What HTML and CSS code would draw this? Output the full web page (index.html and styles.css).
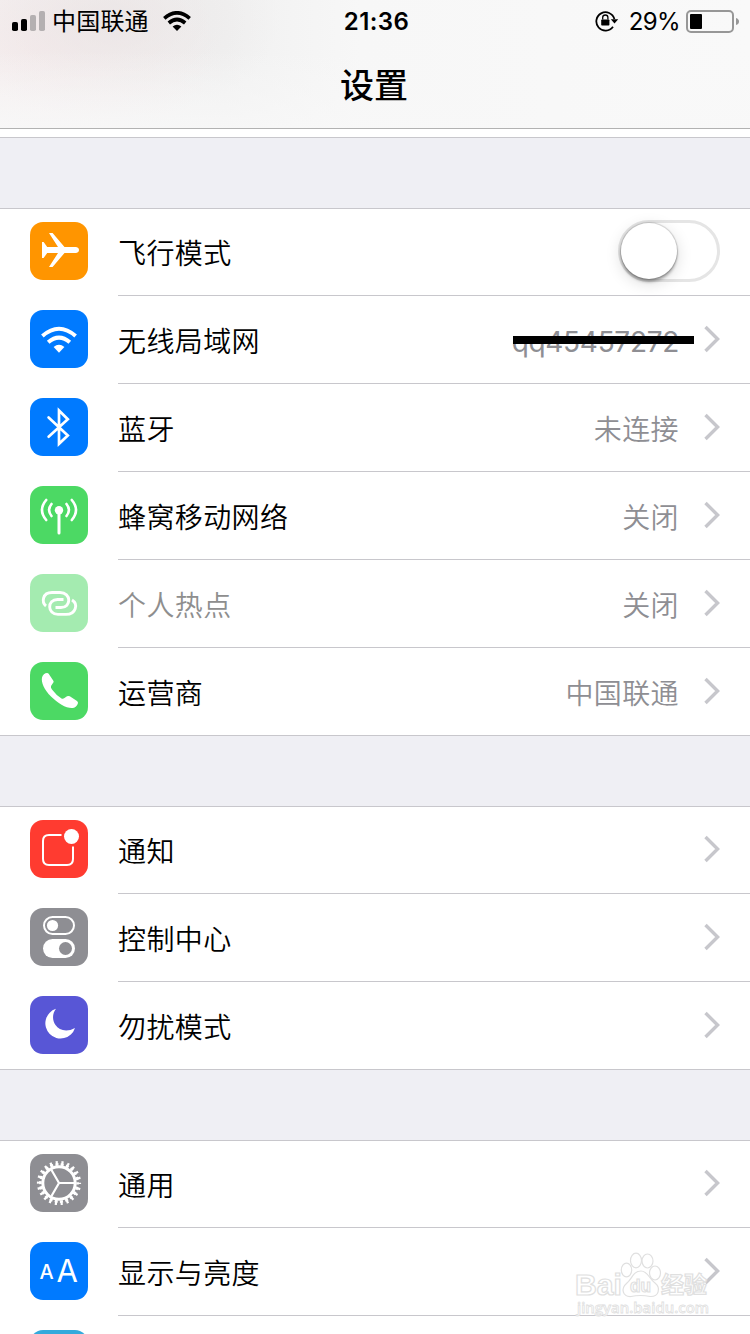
FILE: index.html
```html
<!DOCTYPE html>
<html lang="zh-CN">
<head>
  <meta charset="UTF-8">
  <title>设置</title>
  <meta name="viewport" content="width=device-width, initial-scale=1.0"/>
  <link rel="stylesheet" href="styles.css">
</head>
<body>

<svg class="defs" width="0" height="0">
  <symbol id="chevron" viewBox="0 0 16 28">
    <path d="M1.5 2 L13.6 14 L1.5 26" fill="none" stroke="#c7c7cc" stroke-width="3.4"/>
  </symbol>
</svg>

<!-- HEADER -->
<header class="header">
  <div class="status">
    <div class="status-left">
      <svg class="signal" width="34" height="20" viewBox="0 0 34 20">
        <rect x="0" y="11" width="6" height="9" rx="1.8"/>
        <rect x="9" y="8" width="6" height="12" rx="1.8"/>
        <rect x="18" y="4" width="6" height="16" rx="1.8" fill="#b4b0b1"/>
        <rect x="27" y="0" width="6" height="20" rx="1.8" fill="#b4b0b1"/>
      </svg>
      <span class="carrier">中国联通</span>
      <svg class="wifi" width="28" height="20" viewBox="0 0 28 20">
        <g fill="none" stroke="#000" stroke-width="3.7">
          <path d="M1.3 7.3 Q14 -3.6 26.7 7.3"/>
          <path d="M5.8 12 Q14 5 22.2 12"/>
        </g>
        <path d="M9.6 15.5 Q14 12 18.4 15.5 L14 20 Z"/>
      </svg>
    </div>
    <div class="time">21:36</div>
    <div class="status-right">
      <svg class="lock" width="24" height="22" viewBox="0 0 24 22">
        <path d="M18 16.8 A9.2 9.2 0 1 1 19.4 9" fill="none" stroke="#000" stroke-width="1.8"/>
        <path d="M15.8 9.2 H23.2 L19.5 13.4 Z"/>
        <rect x="6.2" y="9.4" width="8.2" height="6.2" rx="0.8"/>
        <path d="M7.7 9.6 V7.6 A2.6 2.6 0 0 1 12.9 7.6 V9.6" fill="none" stroke="#000" stroke-width="1.3"/>
      </svg>
      <span class="percent">29%</span>
      <svg class="battery" width="54" height="23" viewBox="0 0 54 23">
        <rect x="1" y="1" width="46" height="21" rx="4" fill="none" stroke="#979797" stroke-width="2"/>
        <rect x="4" y="4" width="12" height="15" rx="1"/>
        <path d="M50 8 Q53 9 53 11.5 Q53 14 50 15 Z" fill="#979797"/>
      </svg>
    </div>
  </div>
  <h1>设置</h1>
</header>
<div class="strip"></div>

<!-- NETWORK -->
<section class="group">
  <div class="row">
    <svg class="icon orange" viewBox="0 0 58 58">
      <path fill="#fff" d="M12 20 H13.6 L17.2 25 H28 L19 11 H22.6 L34.5 25 H45.5 Q49 25.3 49 28 Q49 30.7 45.5 31 H34.5 L22.6 45 H19 L28 31 H17.2 L13.6 36 H12 V20 Z"/>
    </svg>
    <div class="row-body">
      <span class="label">飞行模式</span>
      <span class="switch"><i></i></span>
    </div>
  </div>
  <div class="row">
    <svg class="icon blue" viewBox="0 0 58 58">
      <g fill="none" stroke="#fff" stroke-width="4">
        <path d="M12.4 26 Q29 11.5 45.6 26"/>
        <path d="M18.2 32.3 Q29 22.8 39.8 32.3"/>
      </g>
      <path fill="#fff" d="M23.6 37 Q29 32.6 34.4 37 L29 42.7 Z"/>
    </svg>
    <div class="row-body">
      <span class="label">无线局域网</span>
      <span class="value ssid">qq45457272</span>
      <svg class="chevron"><use href="#chevron"/></svg>
    </div>
  </div>
  <div class="row">
    <svg class="icon blue" viewBox="0 0 58 58">
      <path d="M18.6 19.5 L37.8 37.5 L29 45.8 V12.6 L37.8 21.3 L18.6 38.7" fill="none" stroke="#fff" stroke-width="2.7" stroke-linecap="round"/>
    </svg>
    <div class="row-body">
      <span class="label">蓝牙</span>
      <span class="value">未连接</span>
      <svg class="chevron"><use href="#chevron"/></svg>
    </div>
  </div>
  <div class="row">
    <svg class="icon green" viewBox="0 0 58 58">
      <circle cx="29" cy="24.3" r="4.2" fill="#fff"/>
      <g fill="none" stroke="#fff" stroke-width="2.6" stroke-linecap="round">
        <path d="M29 25 V47" stroke-width="3"/>
        <path d="M21.5 18 Q16.7 24 21.5 30"/>
        <path d="M36.5 18 Q41.3 24 36.5 30"/>
        <path d="M16.2 14 Q7.8 24 16.2 34"/>
        <path d="M41.8 14 Q50.2 24 41.8 34"/>
      </g>
    </svg>
    <div class="row-body">
      <span class="label">蜂窝移动网络</span>
      <span class="value">关闭</span>
      <svg class="chevron"><use href="#chevron"/></svg>
    </div>
  </div>
  <div class="row disabled">
    <svg class="icon green" viewBox="0 0 58 58">
      <g fill="none" stroke="#fff" stroke-width="2.9">
        <path d="M16 32 C11.5 28.5 12.2 18.5 22 18.5 H30 C41.5 18.5 41.5 33.5 31 33.5 H25.5"/>
        <path d="M42 26 C48.5 30 46 40.4 36 40.4 H28 C17 40.4 17 25.5 27.5 25.5 H33.5"/>
      </g>
    </svg>
    <div class="row-body">
      <span class="label">个人热点</span>
      <span class="value">关闭</span>
      <svg class="chevron"><use href="#chevron"/></svg>
    </div>
  </div>
  <div class="row">
    <svg class="icon green" viewBox="0 0 58 58">
      <path fill="#fff" d="M12 15.5 C12.5 13 15 11 17 11 Q18.3 11 19 12.2 L23.5 19 Q24 20 23 21 L21 24 Q20.5 25.5 22 27.5 Q26 33 31.5 36.5 Q33 37.3 34.5 36 L37 34.3 Q38.5 33.5 39.8 34.3 L47 39 Q48.5 40 47.8 41.8 Q46.5 45.3 43 46 C37 46.8 28 41.5 21 34.5 C14 27.5 11 20.5 12 15.5 Z"/>
    </svg>
    <div class="row-body">
      <span class="label">运营商</span>
      <span class="value">中国联通</span>
      <svg class="chevron"><use href="#chevron"/></svg>
    </div>
  </div>
</section>

<!-- NOTIFICATIONS -->
<section class="group">
  <div class="row">
    <svg class="icon red" viewBox="0 0 58 58">
      <path d="M31.5 15 H19 Q13 15 13 21 V39 Q13 45 19 45 H37 Q43 45 43 39 V26.5" fill="none" stroke="#fff" stroke-width="2"/>
      <circle cx="41.5" cy="16.5" r="7.5" fill="#fff"/>
    </svg>
    <div class="row-body">
      <span class="label">通知</span>
      <svg class="chevron"><use href="#chevron"/></svg>
    </div>
  </div>
  <div class="row">
    <svg class="icon gray" viewBox="0 0 58 58">
      <rect x="14" y="9" width="30" height="17" rx="8.5" fill="none" stroke="#fff" stroke-width="2"/>
      <circle cx="22.5" cy="17.5" r="5.6" fill="#fff"/>
      <rect x="13" y="31" width="32" height="19" rx="9.5" fill="#fff"/>
      <circle cx="35.5" cy="40.5" r="6.5" fill="#8e8e93"/>
    </svg>
    <div class="row-body">
      <span class="label">控制中心</span>
      <svg class="chevron"><use href="#chevron"/></svg>
    </div>
  </div>
  <div class="row">
    <svg class="icon purple" viewBox="0 0 58 58">
      <path fill="#fff" d="M26 12.8 A15.2 15.2 0 1 0 45 32 C37 36.5 29 34.5 25.5 29 C22 24 22.3 17.5 26 12.8 Z"/>
    </svg>
    <div class="row-body">
      <span class="label">勿扰模式</span>
      <svg class="chevron"><use href="#chevron"/></svg>
    </div>
  </div>
</section>

<!-- GENERAL -->
<section class="group">
  <div class="row">
    <svg class="icon gray" viewBox="0 0 58 58">
      <g fill="none" stroke="#fff">
        <circle cx="29" cy="29" r="16.2" stroke-width="3"/>
        <circle cx="29" cy="29" r="18.6" stroke-width="2.6" stroke-dasharray="3.1 2.212" stroke-dashoffset="1.55"/>
        <circle cx="29" cy="29" r="20.6" stroke-width="3" stroke-dasharray="2.2 3.683" stroke-dashoffset="1.1"/>
        <path d="M29 29 H44 M29 29 L21.5 16 M29 29 L21.5 42" stroke-width="2.2"/>
      </g>
    </svg>
    <div class="row-body">
      <span class="label">通用</span>
      <svg class="chevron"><use href="#chevron"/></svg>
    </div>
  </div>
  <div class="row">
    <svg class="icon blue" viewBox="0 0 58 58">
      <text class="aa-small" x="9.6" y="37">A</text>
      <text class="aa-big" x="26.5" y="40">A</text>
    </svg>
    <div class="row-body">
      <span class="label">显示与亮度</span>
      <svg class="chevron"><use href="#chevron"/></svg>
    </div>
  </div>
  <div class="row cut">
    <svg class="icon cyan" viewBox="0 0 58 58"></svg>
  </div>
</section>

<!-- WATERMARK -->
<svg class="watermark" width="150" height="74" viewBox="0 0 150 74">
  <g class="outline">
    <text class="wm-bai" x="4" y="47" textLength="47" lengthAdjust="spacingAndGlyphs">Bai</text>
    <ellipse cx="55.5" cy="22" rx="5.2" ry="6.8"/>
    <ellipse cx="65" cy="12.5" rx="5.5" ry="7.3"/>
    <ellipse cx="76.5" cy="13" rx="5.5" ry="7"/>
    <ellipse cx="84" cy="25" rx="5.5" ry="7"/>
    <path d="M70 23 C62 23 61 31 56 35 C49 41 52 49 60 48.5 C67 47 72 47 79 48.5 C88 49 90 40 84 35 C78 31 77 23 70 23 Z"/>
    <text class="wm-du" x="59" y="44" textLength="21" lengthAdjust="spacingAndGlyphs">du</text>
    <text class="wm-cn" x="90" y="45">经验</text>
    <text class="wm-url" x="6" y="65" textLength="132" lengthAdjust="spacingAndGlyphs">jingyan.baidu.com</text>
  </g>
</svg>

</body>
</html>
```
FILE: styles.css
```css
html {
  height: 100%;
  overflow: hidden;
}

body {
  font-family: Inter, "Noto Sans CJK SC", sans-serif;
  background: #efeff4;
  margin: 0;
  height: 100%;
  overflow: hidden;
  position: relative;
  color: #000;
}

.defs {
  display: block;
}

.header {
  height: 128px;
  border-bottom: 1px solid #b2b2b2;
  background:
    linear-gradient(180deg, rgba(248,248,248,0) 40%, rgba(248,248,248,0.8)),
    radial-gradient(ellipse 170px 100px at 110px 20px, rgba(229,224,224,0.6), rgba(235,230,230,0)),
    radial-gradient(ellipse 180px 110px at 40px 45px, rgba(247,235,236,0.8), rgba(247,240,240,0)),
    linear-gradient(90deg, #f5f3f3, #f1f1f1 30%, #f7f7f7 48%, #f9f9f9);
}

.status {
  display: grid;
  grid-template-columns: 1fr auto 1fr;
  align-items: center;
  height: 41px;
  padding: 0 10px 0 12px;
}

.status-left, .status-right {
  display: flex;
  align-items: center;
}

.status-right {
  justify-content: flex-end;
}

.carrier {
  font-size: 24px;
  line-height: 40px;
  letter-spacing: 0.2px;
  margin: 2px 14px 0 6px;
}

.time {
  font-size: 24px;
  font-weight: 600;
  letter-spacing: 0.4px;
  padding-left: 1px;
}

.percent {
  font-size: 24px;
  letter-spacing: -0.6px;
  margin: 0 6px 0 10px;
}

h1 {
  margin: 20px 0 0;
  padding-right: 2px;
  font-size: 34px;
  line-height: 50px;
  font-weight: 500;
  text-align: center;
}

.strip {
  height: 8px;
  background: white;
  border-bottom: 1px solid #c8c7cc;
}

.group {
  margin-top: 70px;
  background: white;
  border-top: 1px solid #c8c7cc;
}

.row {
  display: flex;
  box-sizing: border-box;
  height: 88px;
  padding-left: 30px;
}

.row:first-child {
  margin-top: -1px;
}

.row:last-child {
  border-bottom: 1px solid #c8c7cc;
}

.icon {
  flex: none;
  width: 58px;
  height: 58px;
  margin: 14px 30px 0 0;
  border-radius: 13px;
}

.orange { background: #ff9500; }
.blue { background: #007aff; }
.green { background: #4cd964; }
.red { background: #ff3b30; }
.gray { background: #8e8e93; }
.purple { background: #5856d6; }
.cyan { background: #34aadc; }

.row-body {
  flex: 1;
  display: flex;
  align-items: center;
  box-sizing: border-box;
  padding-right: 30px;
  border-bottom: 1px solid #c8c7cc;
}

.row:last-child .row-body {
  border-bottom: none;
}

/* only the top of this row is on screen */
.row.cut {
  height: 18px;
  overflow: hidden;
  border-bottom: none;
}

.label, .value {
  font-size: 28px;
  font-weight: 350;
  line-height: 40px;
  letter-spacing: 0.4px;
  padding-top: 4px;
}

.label {
  flex: 1;
}

.value {
  color: #8e8e93;
}

.disabled .icon {
  opacity: 0.5;
}

.disabled .label {
  color: #8e8e8e;
}

.chevron {
  width: 16px;
  height: 28px;
  margin: -2px 0 0 25px;
}

/* the name is crossed out with a thick bar */
.ssid {
  position: relative;
  font-weight: 400;
  letter-spacing: -0.3px;
}

.ssid::after {
  content: "";
  position: absolute;
  left: 1px;
  right: -15px;
  top: 18px;
  height: 8px;
  background: #000;
}

.switch {
  box-sizing: border-box;
  width: 102px;
  height: 62px;
  margin-top: -1px;
  border: 3px solid #e5e5e5;
  border-radius: 31px;
}

.switch i {
  display: block;
  width: 56px;
  height: 56px;
  border-radius: 50%;
  background: white;
  box-shadow: 0 0 1px 1px rgba(0,0,0,0.15), 0 3px 3px rgba(0,0,0,0.3), 0 4px 16px rgba(0,0,0,0.15);
}

.aa-small, .aa-big {
  fill: white;
  font-size: 20px;
  font-weight: 500;
}

.aa-big {
  font-size: 31px;
  font-weight: 400;
}

.watermark {
  position: absolute;
  left: 571px;
  top: 1248px;
}

.outline {
  fill: white;
  stroke: #e0e0e0;
  stroke-width: 1.2;
  font-weight: bold;
}

.wm-bai {
  font-family: "Liberation Sans", sans-serif;
  font-size: 30px;
}

.wm-du {
  font-family: "Liberation Sans", sans-serif;
  font-size: 19px;
}

.wm-cn {
  font-size: 23px;
}

.wm-url {
  font-family: "Open Sans", sans-serif;
  font-size: 15px;
  font-weight: 600;
  stroke-width: 0.8;
}
```
